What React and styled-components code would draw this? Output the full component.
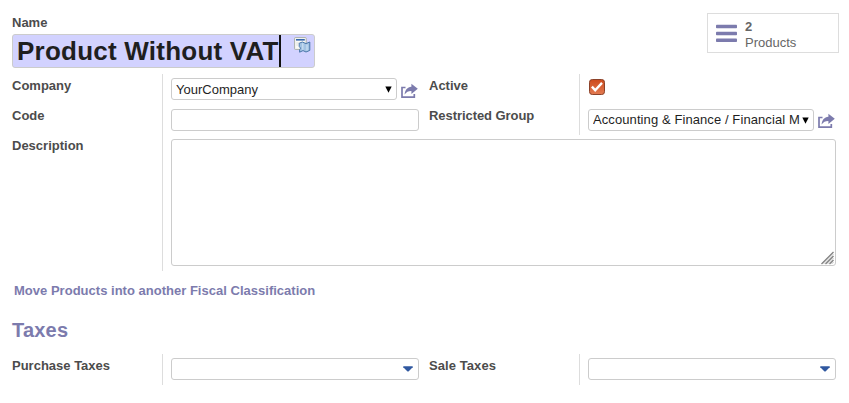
import React from "react";
import styled, { createGlobalStyle } from "styled-components";

const GlobalStyle = createGlobalStyle`
  * { box-sizing: border-box; }
  body {
    margin: 0;
    background: #fff;
    color: #4c4c4c;
    font: 13px/16px "Liberation Sans", Arial, sans-serif;
  }
`;

const Sheet = styled.main`
  width: 849px;
  height: 403px;
  padding: 13px 10px 0 12px;
  overflow: hidden;
`;

const Header = styled.header`
  display: flex;
  justify-content: space-between;
  align-items: flex-start;
  height: 61px;
`;

const Label = styled.label`
  display: block;
  font-weight: bold;
  white-space: nowrap;
  padding-top: ${(p) => p.$top || 0}px;
  letter-spacing: ${(p) => p.$spacing || 0}px;
`;

const TitleBox = styled.div`
  display: flex;
  align-items: flex-start;
  width: 303px;
  height: 34px;
  margin-top: 3px;
  padding-left: 4px;
  border: 1px solid #ccc;
  border-radius: 3px;
  background: #d2d2ff;
`;

const TitleText = styled.span`
  width: 262px;
  font-size: 26px;
  font-weight: bold;
  letter-spacing: 0.23px;
  line-height: 32px;
  color: #1f1f1f;
  white-space: nowrap;
`;

const Caret = styled.span`
  width: 2px;
  height: 32px;
  background: #111;
`;

const TranslateIcon = styled.svg`
  margin: 2px 0 0 13px;
`;

const StatButton = styled.button`
  display: flex;
  align-items: center;
  width: 132px;
  height: 40px;
  padding: 0 0 0 8px;
  border: 1px solid #ddd;
  background: #fff;
  color: #666;
  font: inherit;
  line-height: 16px;
  text-align: left;
`;

const StatText = styled.span`
  display: flex;
  flex-direction: column;
  margin: 3px 0 0 8px;
`;

const Group = styled.section`
  display: grid;
  grid-template-columns: 150px 257px 160px 257px;
  grid-template-rows: ${(p) => p.$rows};
`;

const SideLabel = styled(Label)`
  padding-left: 10px;
`;

const Cell = styled.div`
  display: flex;
  align-items: flex-start;
  grid-column: ${(p) => (p.$wide ? "span 3" : "auto")};
  padding: ${(p) => p.$top || 4}px 0 0 8px;
  border-left: 1px solid #ddd;
`;

const Field = styled.div`
  display: flex;
  justify-content: space-between;
  align-items: center;
  width: ${(p) => p.$width || 248}px;
  height: 22px;
  padding: 0 ${(p) => p.$right || 4}px 0 4px;
  border: 1px solid #ccc;
  border-radius: 3px;
  color: #1f1f1f;
  white-space: nowrap;
`;

const Value = styled.span`
  width: 208px;
  overflow: hidden;
  padding-top: ${(p) => p.$drop || 0}px;
  letter-spacing: ${(p) => p.$spacing || 0}px;
`;

const TextArea = styled.div`
  display: flex;
  justify-content: flex-end;
  align-items: flex-end;
  width: 665px;
  height: 127px;
  border: 1px solid #ccc;
  border-radius: 3px;
`;

const ShareSvg = styled.svg`
  margin: ${(p) => p.$top}px 0 0 4px;
`;

const CheckSvg = styled.svg`
  margin: 1px 0 0 1px;
`;

const MoveLink = styled.a`
  display: block;
  margin: 12px 0 0 2px;
  color: #7c7bad;
  font-weight: bold;
  letter-spacing: 0.015px;
`;

const SectionTitle = styled.h2`
  margin: 19px 0 0;
  height: 36px;
  color: #7c7bad;
  font-size: 20px;
  letter-spacing: 0.2px;
  line-height: 24px;
`;

const Share = ({ top }) => (
  <ShareSvg $top={top} width="18" height="16" viewBox="0 0 18 16">
    <path d="M4.5 4.5H1V14.1H13.3V11" fill="none" stroke="#7c7bad" strokeWidth="1.7" />
    <path d="M10.4 0.7L16.8 5.8L10.4 10.9V8C7.4 7.9 5.6 9 3.6 11.6C3.9 7.2 6.4 4 10.4 3.8Z" fill="#7c7bad" />
  </ShareSvg>
);

const SelectArrow = () => (
  <svg width="7" height="7" viewBox="0 0 7 7">
    <path d="M0.3 0.5H6.7L3.5 6.8Z" fill="#000" />
  </svg>
);

const DropArrow = () => (
  <svg width="10" height="6" viewBox="0 0 10 6">
    <path d="M0.3 0.3H9.7V1.2L5.5 5.6H4.5L0.3 1.2Z" fill="#3058a0" />
  </svg>
);

const Menu = () => (
  <svg width="21" height="18" viewBox="0 0 21 18">
    <g fill="#7c7bad">
      <rect y="0.8" width="21" height="3.4" rx="0.8" />
      <rect y="7.8" width="21" height="3.4" rx="0.8" />
      <rect y="14.6" width="21" height="3.4" rx="0.8" />
    </g>
  </svg>
);

const Translate = () => (
  <TranslateIcon width="17" height="17" viewBox="0 0 17 17">
    <rect x="0.6" y="0.6" width="11.6" height="11.8" rx="0.6" fill="#fafaf6" stroke="#a9afaa" />
    <path d="M2 2.8H10.8" stroke="#3566ad" strokeWidth="1.6" />
    <path d="M2.2 6H5M2.2 8H4" stroke="#dfe2df" />
    <path d="M5.2 6.2L8.4 5L12 6.6L15.8 5V13.4L12 15L9 13.6L5.6 15.2V12.8L6.6 11.2L5.2 9.4Z" fill="#a3c3e3" stroke="#4a77a9" strokeWidth="1" />
    <path d="M8.8 6.2V12.8M13 7.4V13.6" stroke="#d0e3f4" strokeWidth="1.1" />
  </TranslateIcon>
);

const Checkbox = () => (
  <CheckSvg width="16" height="16" viewBox="0 0 16 16">
    <defs>
      <linearGradient id="checkFill" x1="0" y1="0" x2="0" y2="1">
        <stop offset="0" stopColor="#cd4b1d" />
        <stop offset="1" stopColor="#e37b52" />
      </linearGradient>
    </defs>
    <rect x="0.5" y="0.5" width="15" height="15" rx="2.8" fill="url(#checkFill)" stroke="#8b4229" />
    <path d="M2.9 7.6L6.2 11.2L13 3.9" fill="none" stroke="#fff" strokeWidth="2.4" />
  </CheckSvg>
);

const Resizer = () => (
  <svg width="14" height="14" viewBox="0 0 14 14">
    <path d="M0.5 13L12.5 1M4.5 13L12.5 5M8.5 13L12.5 9" stroke="#808080" strokeWidth="1.3" />
    <path d="M2.5 13L12.5 3M6.5 13L12.5 7M10.5 13L12.5 11" stroke="#b5b5b5" strokeWidth="0.8" />
  </svg>
);

export default function App() {
  return (
    <>
      <GlobalStyle />
      <Sheet>
        <Header>
          <div>
            <Label $top={2}>Name</Label>
            <TitleBox>
              <TitleText>Product Without VAT</TitleText>
              <Caret />
              <Translate />
            </TitleBox>
          </div>
          <StatButton>
            <Menu />
            <StatText>
              <b>2</b>
              <span>Products</span>
            </StatText>
          </StatButton>
        </Header>
        <Group $rows="30px 31px 136px">
          <Label $top={4}>Company</Label>
          <Cell>
            <Field $width={226}><Value $drop={2}>YourCompany</Value><SelectArrow /></Field>
            <Share top={5} />
          </Cell>
          <SideLabel $top={4}>Active</SideLabel>
          <Cell><Checkbox /></Cell>
          <Label $top={4}>Code</Label>
          <Cell $top={5}><Field /></Cell>
          <SideLabel $top={4} $spacing={-0.06}>Restricted Group</SideLabel>
          <Cell $top={5}>
            <Field $width={226}>
              <Value $spacing={0.09}>Accounting &amp; Finance / Financial M</Value>
              <SelectArrow />
            </Field>
            <Share top={4} />
          </Cell>
          <Label $top={3}>Description</Label>
          <Cell $wide $top={4}><TextArea><Resizer /></TextArea></Cell>
        </Group>
        <MoveLink>Move Products into another Fiscal Classification</MoveLink>
        <SectionTitle>Taxes</SectionTitle>
        <Group $rows="31px">
          <Label $top={4}>Purchase Taxes</Label>
          <Cell><Field $right={5}><span /><DropArrow /></Field></Cell>
          <SideLabel $top={4} $spacing={0.08}>Sale Taxes</SideLabel>
          <Cell><Field $right={5}><span /><DropArrow /></Field></Cell>
        </Group>
      </Sheet>
    </>
  );
}
